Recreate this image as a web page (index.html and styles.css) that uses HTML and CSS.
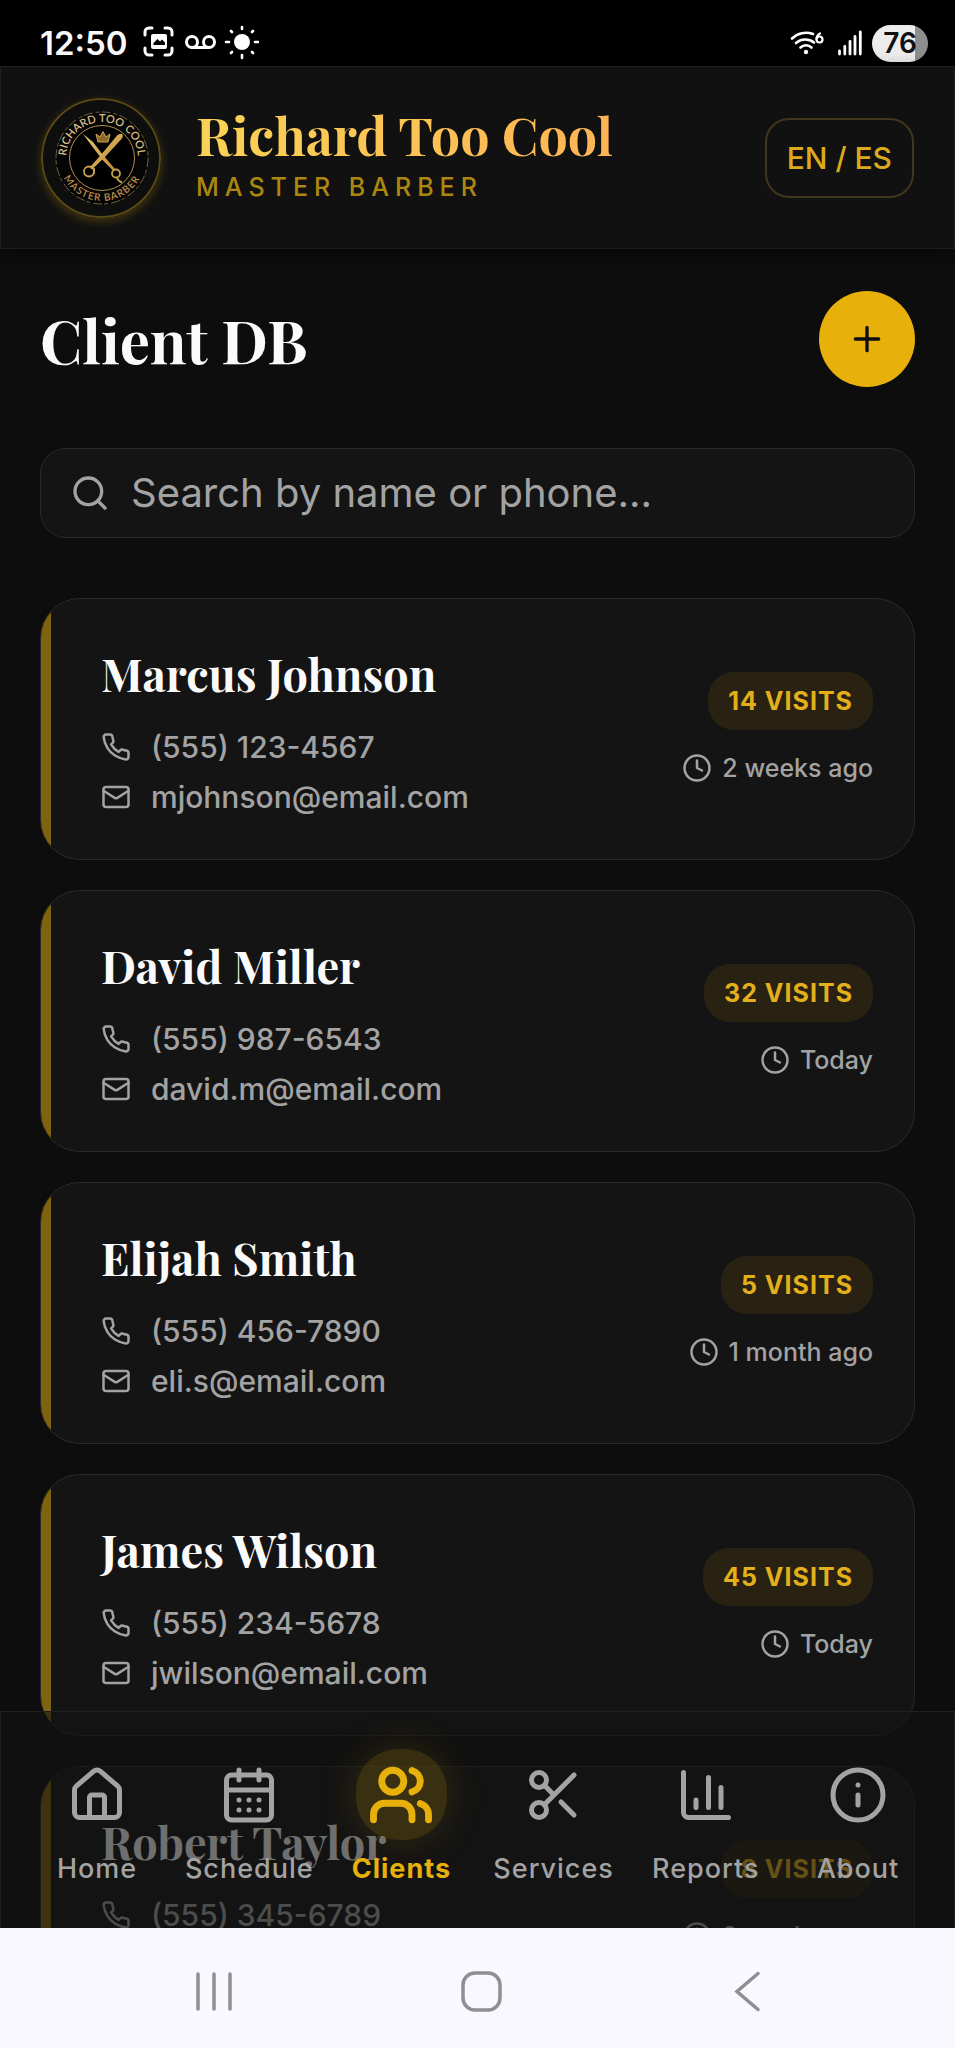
FILE: index.html
```html
<!DOCTYPE html>
<html lang="en">
<head>
<meta charset="utf-8">
<meta name="viewport" content="width=device-width, initial-scale=1">
<title>Client DB</title>
<link rel="stylesheet" href="styles.css">
</head>
<body>
<svg class="sprite" aria-hidden="true">
  <symbol id="phone" viewBox="0 0 24 24"><path d="M22 16.92v3a2 2 0 0 1-2.18 2 19.79 19.79 0 0 1-8.63-3.07 19.5 19.5 0 0 1-6-6 19.79 19.79 0 0 1-3.07-8.67A2 2 0 0 1 4.11 2h3a2 2 0 0 1 2 1.72 12.84 12.84 0 0 0 .7 2.81 2 2 0 0 1-.45 2.11L8.09 9.91a16 16 0 0 0 6 6l1.27-1.27a2 2 0 0 1 2.11-.45 12.84 12.84 0 0 0 2.81.7A2 2 0 0 1 22 16.92z"/></symbol>
  <symbol id="mail" viewBox="0 0 24 24"><rect x="2" y="4" width="20" height="16" rx="2"/><path d="m22 7-8.97 5.7a1.94 1.94 0 0 1-2.06 0L2 7"/></symbol>
  <symbol id="clock" viewBox="0 0 24 24"><circle cx="12" cy="12" r="10"/><path d="M12 6v6l4 2"/></symbol>
</svg>

<div class="status">
  <div class="status-left">
    <span class="status-time">12:50</span>
    <svg class="status-icons" viewBox="0 0 116 36" aria-hidden="true">
      <g fill="none" stroke="#fff" stroke-width="3" stroke-linecap="round">
        <path d="M2 10V7a4 4 0 0 1 4-4h3M22 3h3a4 4 0 0 1 4 4v3M29 23v3a4 4 0 0 1-4 4h-3M9 30H6a4 4 0 0 1-4-4v-3"/>
        <circle cx="49" cy="17" r="5.500"/><circle cx="66" cy="17" r="5.500"/><path d="M49 22.500h17"/>
        <path d="M99 2v2M99 30v3M83 17h3M112 17h3M88 6l1 1M109 27l1 1M88 28l1-1M109 7l1-1" stroke-width="2.600"/>
      </g>
      <rect x="8" y="9" width="16" height="15" rx="2" fill="#fff"/>
      <path d="M10.500 20v-2l4-4 2.500 2.500 2-2 3 3V20z" fill="#000"/>
      <circle cx="99" cy="17" r="8" fill="#fff"/>
    </svg>
  </div>
  <div class="status-right">
    <svg class="wifi" viewBox="0 0 34 26" aria-hidden="true">
      <g fill="none" stroke="#fff" stroke-width="2.600" stroke-linecap="round">
        <path d="M2 8.500A20 20 0 0 1 23 4M6 13a14 14 0 0 1 18-.500M10.500 17.500a8 8 0 0 1 11 0"/>
        <path d="M30 3.500c-2 1-3.500 3-3.500 5.500" stroke-width="2.200"/><circle cx="29.500" cy="9.500" r="3" stroke-width="2.200"/>
      </g>
      <circle cx="16" cy="22" r="2.200" fill="#fff"/>
    </svg>
    <svg class="signal" viewBox="0 0 24 26" aria-hidden="true">
      <path d="M1.500 21v3M6.800 16.500V24M12 11.500V24M17 6.500V24M22.300 2v22" stroke="#fff" stroke-width="2.800" stroke-linecap="round"/>
    </svg>
    <span class="battery">76</span>
  </div>
</div>

<header class="topbar">
  <svg class="logo" viewBox="0 0 120 120" role="img" aria-label="Richard Too Cool Master Barber logo">
    <defs>
      <linearGradient id="gold" x1="0" y1="0" x2="1" y2="1"><stop offset="0" stop-color="#e8c876"/><stop offset="1" stop-color="#b8862c"/></linearGradient>
      <path id="arc-top" d="M25.500 66a36 36 0 1 1 71 0"/>
      <path id="arc-bottom" d="M18 60a43 43 0 0 0 86 0"/>
    </defs>
    <circle cx="60" cy="60" r="59" fill="#0e0e0e" stroke="#5c4a15" stroke-width="2"/>
    <circle cx="61" cy="60" r="46" fill="#050505" stroke="#8f7a4b" stroke-width="0.800" stroke-dasharray="9 3 4 2"/>
    <circle cx="61" cy="60" r="32.500" fill="#000" stroke="#b08f4e" stroke-width="1"/>
    <text class="logo-text" fill="#d6bd88"><textPath href="#arc-top" startOffset="50%">RICHARD TOO COOL</textPath></text>
    <text class="logo-text logo-text-low" fill="#bf8f4a"><textPath href="#arc-bottom" startOffset="50%">MASTER BARBER</textPath></text>
    <path d="M57 44l-2-8 4 3 3-5.500 3 5.500 4-3-2 8z" fill="#8a6a2c" stroke="#d0a650" stroke-width="1"/>
    <path d="M42 36l10 8 10 13 12 14-2 1.500-11-11zM81 36q2 2-.500 5L63 60 51 71.500l-2.500-2L59 58l15-18q4-5 7-4z" fill="url(#gold)"/>
    <g fill="none" stroke="#c9a04e" stroke-width="1.800"><circle cx="48" cy="73.500" r="5"/><circle cx="75" cy="75.500" r="4"/><path d="M76 80q2 4 5 4M53 76v-6"/></g>
  </svg>
  <div class="brand">
    <div class="brand-name">Richard Too Cool</div>
    <div class="brand-sub">MASTER BARBER</div>
  </div>
  <button class="lang" type="button">EN / ES</button>
</header>

<div class="viewport">
  <main class="content">
    <div class="page-head">
      <h1>Client DB</h1>
      <button class="add" type="button" aria-label="Add client"><svg class="icon" viewBox="0 0 24 24"><path d="M5 12h14M12 5v14"/></svg></button>
    </div>
    <label class="search">
      <svg class="icon" viewBox="0 0 24 24" aria-hidden="true"><circle cx="11" cy="11" r="8"/><path d="m21 21-4.300-4.300"/></svg>
      <input type="search" placeholder="Search by name or phone..." aria-label="Search by name or phone">
    </label>
    <div class="clients">
      <article class="card">
        <div class="info">
          <h2>Marcus Johnson</h2>
          <p class="line"><svg class="icon"><use href="#phone"/></svg>(555) 123-4567</p>
          <p class="line"><svg class="icon"><use href="#mail"/></svg>mjohnson@email.com</p>
        </div>
        <div class="meta"><span class="visits">14 VISITS</span><span class="ago"><svg class="icon"><use href="#clock"/></svg>2 weeks ago</span></div>
      </article>
      <article class="card">
        <div class="info">
          <h2>David Miller</h2>
          <p class="line"><svg class="icon"><use href="#phone"/></svg>(555) 987-6543</p>
          <p class="line"><svg class="icon"><use href="#mail"/></svg>david.m@email.com</p>
        </div>
        <div class="meta"><span class="visits">32 VISITS</span><span class="ago"><svg class="icon"><use href="#clock"/></svg>Today</span></div>
      </article>
      <article class="card">
        <div class="info">
          <h2>Elijah Smith</h2>
          <p class="line"><svg class="icon"><use href="#phone"/></svg>(555) 456-7890</p>
          <p class="line"><svg class="icon"><use href="#mail"/></svg>eli.s@email.com</p>
        </div>
        <div class="meta"><span class="visits">5 VISITS</span><span class="ago"><svg class="icon"><use href="#clock"/></svg>1 month ago</span></div>
      </article>
      <article class="card">
        <div class="info">
          <h2>James Wilson</h2>
          <p class="line"><svg class="icon"><use href="#phone"/></svg>(555) 234-5678</p>
          <p class="line"><svg class="icon"><use href="#mail"/></svg>jwilson@email.com</p>
        </div>
        <div class="meta"><span class="visits">45 VISITS</span><span class="ago"><svg class="icon"><use href="#clock"/></svg>Today</span></div>
      </article>
      <article class="card">
        <div class="info">
          <h2>Robert Taylor</h2>
          <p class="line"><svg class="icon"><use href="#phone"/></svg>(555) 345-6789</p>
          <p class="line"><svg class="icon"><use href="#mail"/></svg>rtaylor@email.com</p>
        </div>
        <div class="meta"><span class="visits">8 VISITS</span><span class="ago"><svg class="icon"><use href="#clock"/></svg>3 weeks ago</span></div>
      </article>
    </div>
  </main>

  <nav class="tabs" aria-label="Main">
    <a class="tab" href="#home"><span class="tab-icon"><svg class="icon" viewBox="0 0 24 24"><path d="M15 21v-8a1 1 0 0 0-1-1h-4a1 1 0 0 0-1 1v8"/><path d="M3 10a2 2 0 0 1 .709-1.528l7-5.999a2 2 0 0 1 2.582 0l7 5.999A2 2 0 0 1 21 10v9a2 2 0 0 1-2 2H5a2 2 0 0 1-2-2z"/></svg></span>Home</a>
    <a class="tab" href="#schedule"><span class="tab-icon"><svg class="icon" viewBox="0 0 24 24"><path d="M8 2v4M16 2v4M3 10h18M8 14h.01M12 14h.01M16 14h.01M8 18h.01M12 18h.01M16 18h.01"/><rect x="3" y="4" width="18" height="18" rx="2"/></svg></span>Schedule</a>
    <a class="tab active" href="#clients" aria-current="page"><span class="tab-icon"><svg class="icon" viewBox="0 0 24 24"><path d="M16 21v-2a4 4 0 0 0-4-4H6a4 4 0 0 0-4 4v2"/><circle cx="9" cy="7" r="4"/><path d="M22 21v-2a4 4 0 0 0-3-3.870M16 3.130a4 4 0 0 1 0 7.750"/></svg></span>Clients</a>
    <a class="tab" href="#services"><span class="tab-icon"><svg class="icon" viewBox="0 0 24 24"><circle cx="6" cy="6" r="3"/><path d="M8.120 8.120 12 12M20 4 8.120 15.880"/><circle cx="6" cy="18" r="3"/><path d="M14.800 14.800 20 20"/></svg></span>Services</a>
    <a class="tab" href="#reports"><span class="tab-icon"><svg class="icon" viewBox="0 0 24 24"><path d="M3 3v16a2 2 0 0 0 2 2h16M18 17V9M13 17V5M8 17v-3"/></svg></span>Reports</a>
    <a class="tab" href="#about"><span class="tab-icon"><svg class="icon" viewBox="0 0 24 24"><circle cx="12" cy="12" r="10"/><path d="M12 16v-4M12 8h.01"/></svg></span>About</a>
  </nav>
</div>

<div class="system">
  <button type="button" aria-label="Recent apps"><svg viewBox="0 0 48 48"><path d="M8 6v35M24 6v35M40 6v35"/></svg></button>
  <button type="button" aria-label="Home"><svg viewBox="0 0 48 48"><rect x="6" y="5" width="37" height="37" rx="12"/></svg></button>
  <button type="button" aria-label="Back"><svg viewBox="0 0 48 48"><path d="M34 5.500 13 23.500l21 18"/></svg></button>
</div>
</body>
</html>
```
FILE: styles.css
```css
:root {
  --gold: #e7b00b;
  --muted: #a3a3a3;
  --page: #0d0d0d;
  --card: #141414;
  --line: #2a2a2a;
  --sans: Inter, "Noto Sans", sans-serif;
  --serif: "Playfair Display", "Liberation Serif", serif;
}

* { box-sizing: border-box; }

body {
  margin: 0;
  height: 100vh;
  display: flex;
  flex-direction: column;
  background: var(--page);
  color: #fafafa;
  font-family: var(--sans);
}

h1, h2, p { margin: 0; }

button { font: inherit; padding: 0; border: 0; cursor: pointer; }

.sprite { display: none; }

.icon {
  flex: none;
  fill: none;
  stroke: currentColor;
  stroke-width: 2;
  stroke-linecap: round;
  stroke-linejoin: round;
}

/* Phone status bar */
.status {
  flex: none;
  height: 66px;
  padding: 20px 27px 0 40px;
  display: flex;
  justify-content: space-between;
  align-items: center;
  background: #000;
}

.status-left, .status-right { display: flex; align-items: center; }
.status-left { gap: 15px; }
.status-time { font-size: 33px; line-height: 44px; font-weight: 600; }
.status-icons { width: 116px; height: 36px; }
.status-right { gap: 10px; }
.wifi { width: 34px; height: 26px; margin-right: 4px; }
.signal { width: 24px; height: 26px; }

.battery {
  width: 56px;
  height: 37px;
  border-radius: 19px;
  background: linear-gradient(90deg, #ededed 76%, #8e8e8e 76%);
  color: #111;
  font-size: 28px;
  line-height: 37px;
  font-weight: 600;
  text-align: center;
}

/* App header */
.topbar {
  flex: none;
  position: relative;
  z-index: 1;
  display: flex;
  align-items: center;
  padding: 31px 40px 30px;
  border: 1px solid #1e1e1e;
  background: #111;
  box-shadow: 0 4px 16px rgba(0, 0, 0, 0.5);
}

.logo {
  width: 120px;
  height: 120px;
  border-radius: 50%;
  box-shadow: 0 3px 10px rgba(231, 176, 11, 0.25);
}

.logo-text { font: 600 11px Lato, var(--sans); text-anchor: middle; }
.logo-text-low { font-size: 10px; letter-spacing: 1px; }

.brand { flex: 1; padding-left: 35px; }

.brand-name {
  width: max-content;
  font: 700 52px/58px var(--serif);
  background: linear-gradient(90deg, #fad255, #fdb454);
  background-clip: text;
  -webkit-background-clip: text;
  color: transparent;
}

.brand-sub {
  font-size: 25px;
  line-height: 46px;
  font-weight: 500;
  letter-spacing: 6px;
  color: #ac8710;
}

.lang {
  height: 80px;
  padding: 0 20px;
  border: 2px solid #41371a;
  border-radius: 24px;
  background: transparent;
  color: #dcab1c;
  font-size: 30px;
  font-weight: 500;
}

.viewport {
  position: relative;
  flex: 1;
  min-height: 0;
  overflow: hidden;
}

.content { padding: 42px 40px; }

.page-head {
  display: flex;
  justify-content: space-between;
  align-items: center;
  margin-bottom: 61px;
}

.page-head h1 { font: 700 60px/84px var(--serif); }

.add {
  width: 96px;
  height: 96px;
  display: grid;
  place-items: center;
  border-radius: 50%;
  background: var(--gold);
  color: #0d0d0d;
}

.add .icon { width: 40px; height: 40px; }

.search {
  height: 90px;
  display: flex;
  align-items: center;
  gap: 21px;
  padding: 0 29px;
  margin-bottom: 60px;
  border: 1px solid var(--line);
  border-radius: 26px;
  background: var(--card);
  color: var(--muted);
}

.search .icon { width: 40px; height: 40px; }

.search input {
  flex: 1;
  min-width: 0;
  padding: 0;
  border: 0;
  outline: 0;
  background: transparent;
  color: #fafafa;
  font: 400 40px/52px var(--sans);
}

.search input::placeholder { color: var(--muted); opacity: 1; }

.clients { display: flex; flex-direction: column; gap: 30px; }

.card {
  position: relative;
  overflow: hidden;
  display: flex;
  justify-content: space-between;
  align-items: center;
  padding: 37px 41px 37px 60px;
  border: 1px solid var(--line);
  border-radius: 40px;
  background: var(--card);
}

.card::before {
  content: "";
  position: absolute;
  inset: 0 auto 0 0;
  width: 10px;
  background: #806310;
}

.card h2 { margin-bottom: 12px; font: 700 45px/74px var(--serif); }

.line {
  display: flex;
  align-items: center;
  gap: 20px;
  color: var(--muted);
  font-size: 30px;
  line-height: 50px;
  font-weight: 500;
}

.line .icon { width: 30px; height: 30px; }

.meta {
  display: flex;
  flex-direction: column;
  align-items: flex-end;
  gap: 20px;
}

.visits {
  padding: 0 20px;
  border-radius: 26px;
  background: #292213;
  color: #e3b01c;
  font-size: 25px;
  line-height: 58px;
  font-weight: 700;
  letter-spacing: 1px;
}

.ago {
  display: flex;
  align-items: center;
  gap: 10px;
  color: var(--muted);
  font-size: 25px;
  line-height: 36px;
  font-weight: 500;
}

.ago .icon { width: 30px; height: 30px; }

/* Bottom tab bar */
.tabs {
  position: absolute;
  inset: auto 0 0;
  display: flex;
  padding: 37px 20px 41px;
  border: 1px solid #202020;
  border-bottom: 0;
  background: rgba(18, 18, 18, 0.6);
}

.tab {
  flex: 1 1 0;
  display: flex;
  flex-direction: column;
  align-items: center;
  gap: 11px;
  color: var(--muted);
  font-size: 27px;
  line-height: 36px;
  font-weight: 500;
  letter-spacing: 1px;
  text-decoration: none;
}

.tab-icon {
  width: 91px;
  height: 91px;
  display: grid;
  place-items: center;
  border-radius: 42px;
}

.tab-icon .icon { width: 60px; height: 60px; }

.tab.active { color: var(--gold); font-weight: 700; }

.active .tab-icon {
  background: rgba(231, 176, 11, 0.18);
  box-shadow: 0 0 40px rgba(231, 176, 11, 0.15);
}

.active .tab-icon .icon { width: 66px; height: 66px; stroke-width: 2.5; }

/* System navigation */
.system {
  flex: none;
  height: 120px;
  display: flex;
  justify-content: center;
  align-items: center;
  gap: 219px;
  padding: 8px 0 0 6px;
  background: #f9f8ff;
}

.system button { width: 48px; height: 48px; background: transparent; }

.system svg {
  display: block;
  fill: none;
  stroke: #8e8e93;
  stroke-width: 3.5;
  stroke-linecap: round;
}
```
